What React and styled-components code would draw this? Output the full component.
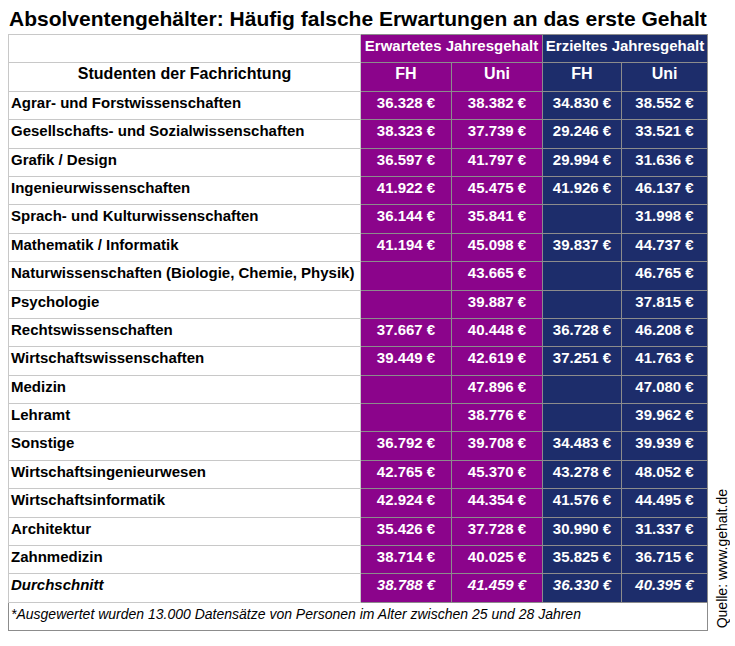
import React from 'react';
import styled, { createGlobalStyle } from 'styled-components';

const GlobalStyle = createGlobalStyle`
    body {
        margin: 0;
        background: #fff;
        font-family: "Liberation Sans", Arial, Helvetica, sans-serif;
        color: #000;
    }
`;

const PURPLE = '#8b048b';
const BLUE = '#1d2d6b';

const rows = [
    ['Agrar- und Forstwissenschaften', '36.328 €', '38.382 €', '34.830 €', '38.552 €'],
    ['Gesellschafts- und Sozialwissenschaften', '38.323 €', '37.739 €', '29.246 €', '33.521 €'],
    ['Grafik / Design', '36.597 €', '41.797 €', '29.994 €', '31.636 €'],
    ['Ingenieurwissenschaften', '41.922 €', '45.475 €', '41.926 €', '46.137 €'],
    ['Sprach- und Kulturwissenschaften', '36.144 €', '35.841 €', '', '31.998 €'],
    ['Mathematik / Informatik', '41.194 €', '45.098 €', '39.837 €', '44.737 €'],
    ['Naturwissenschaften (Biologie, Chemie, Physik)', '', '43.665 €', '', '46.765 €'],
    ['Psychologie', '', '39.887 €', '', '37.815 €'],
    ['Rechtswissenschaften', '37.667 €', '40.448 €', '36.728 €', '46.208 €'],
    ['Wirtschaftswissenschaften', '39.449 €', '42.619 €', '37.251 €', '41.763 €'],
    ['Medizin', '', '47.896 €', '', '47.080 €'],
    ['Lehramt', '', '38.776 €', '', '39.962 €'],
    ['Sonstige', '36.792 €', '39.708 €', '34.483 €', '39.939 €'],
    ['Wirtschaftsingenieurwesen', '42.765 €', '45.370 €', '43.278 €', '48.052 €'],
    ['Wirtschaftsinformatik', '42.924 €', '44.354 €', '41.576 €', '44.495 €'],
    ['Architektur', '35.426 €', '37.728 €', '30.990 €', '31.337 €'],
    ['Zahnmedizin', '38.714 €', '40.025 €', '35.825 €', '36.715 €'],
];

const average = ['Durchschnitt', '38.788 €', '41.459 €', '36.330 €', '40.395 €'];

const App = () => {
    return (
        <Page>
            <GlobalStyle />
            <Main>
                <Title>Absolventengehälter: Häufig falsche Erwartungen an das erste Gehalt</Title>
                <Table>
                    <colgroup>
                        <col style={{ width: 352 }} />
                        <col style={{ width: 91 }} />
                        <col style={{ width: 91 }} />
                        <col style={{ width: 79 }} />
                        <col style={{ width: 86 }} />
                    </colgroup>
                    <thead>
                        <tr>
                            <LabelCell />
                            <GroupCell colSpan={2} $bg={PURPLE}>Erwartetes Jahresgehalt</GroupCell>
                            <GroupCell colSpan={2} $bg={BLUE}>Erzieltes Jahresgehalt</GroupCell>
                        </tr>
                        <tr>
                            <LabelCell $center $big>Studenten der Fachrichtung</LabelCell>
                            <ValueCell $bg={PURPLE} $big>FH</ValueCell>
                            <ValueCell $bg={PURPLE} $big>Uni</ValueCell>
                            <ValueCell $bg={BLUE} $big>FH</ValueCell>
                            <ValueCell $bg={BLUE} $big>Uni</ValueCell>
                        </tr>
                    </thead>
                    <tbody>
                        {[...rows, average].map((r, i) => {
                            const italic = i === rows.length;
                            return (
                                <tr key={r[0]}>
                                    <LabelCell $italic={italic}>{r[0]}</LabelCell>
                                    <ValueCell $bg={PURPLE} $italic={italic}>{r[1]}</ValueCell>
                                    <ValueCell $bg={PURPLE} $italic={italic}>{r[2]}</ValueCell>
                                    <ValueCell $bg={BLUE} $italic={italic}>{r[3]}</ValueCell>
                                    <ValueCell $bg={BLUE} $italic={italic}>{r[4]}</ValueCell>
                                </tr>
                            );
                        })}
                        <tr>
                            <NoteCell colSpan={5}>*Ausgewertet wurden 13.000 Datensätze von Personen im Alter zwischen 25 und 28 Jahren</NoteCell>
                        </tr>
                    </tbody>
                </Table>
            </Main>
            <Source>Quelle: www.gehalt.de</Source>
        </Page>
    );
};

export default App;

const Page = styled.div`
    display: flex;
    align-items: flex-end;
    gap: 6px;
    padding: 7px 0 0 8px;
`;

const Main = styled.div`
    display: flex;
    flex-direction: column;
`;

const Title = styled.h1`
    margin: 0 0 3px 1px;
    font-size: 21px;
    line-height: 24px;
    font-weight: bold;
    white-space: nowrap;
`;

const Table = styled.table`
    border-collapse: collapse;
    table-layout: fixed;
    width: 699px;
    border: 1px solid #b8b8b8;

    td, th {
        height: 28.4px;
        box-sizing: border-box;
        padding: 3px 2px 0;
        vertical-align: top;
        font-size: 15px;
        line-height: 16px;
        font-weight: bold;
        white-space: nowrap;
    }
`;

const LabelCell = styled.td`
    background: #fff;
    color: #000;
    border: 1px solid #c8c8c8;
    text-align: ${p => (p.$center ? 'center' : 'left')};
    font-style: ${p => (p.$italic ? 'italic' : 'normal')};
    && {
        font-size: ${p => (p.$big ? '16px' : '15px')};
    }
`;

const ValueCell = styled.td`
    background: ${p => p.$bg};
    color: #fff;
    border: 1px solid #8c8c8c;
    text-align: center;
    font-style: ${p => (p.$italic ? 'italic' : 'normal')};
    && {
        font-size: ${p => (p.$big ? '16px' : '15px')};
    }
`;

const GroupCell = styled.th`
    background: ${p => p.$bg};
    color: #fff;
    border: 1px solid #8c8c8c;
    text-align: center;
`;

const NoteCell = styled.td`
    && {
        font-size: 14px;
        font-weight: normal;
        font-style: italic;
    }
    background: #fff;
    border: 1px solid #8c8c8c;
    text-align: left;
`;

const Source = styled.div`
    writing-mode: vertical-rl;
    transform: rotate(180deg);
    font-size: 14px;
    line-height: 16px;
    margin-bottom: 3px;
    white-space: nowrap;
`;
